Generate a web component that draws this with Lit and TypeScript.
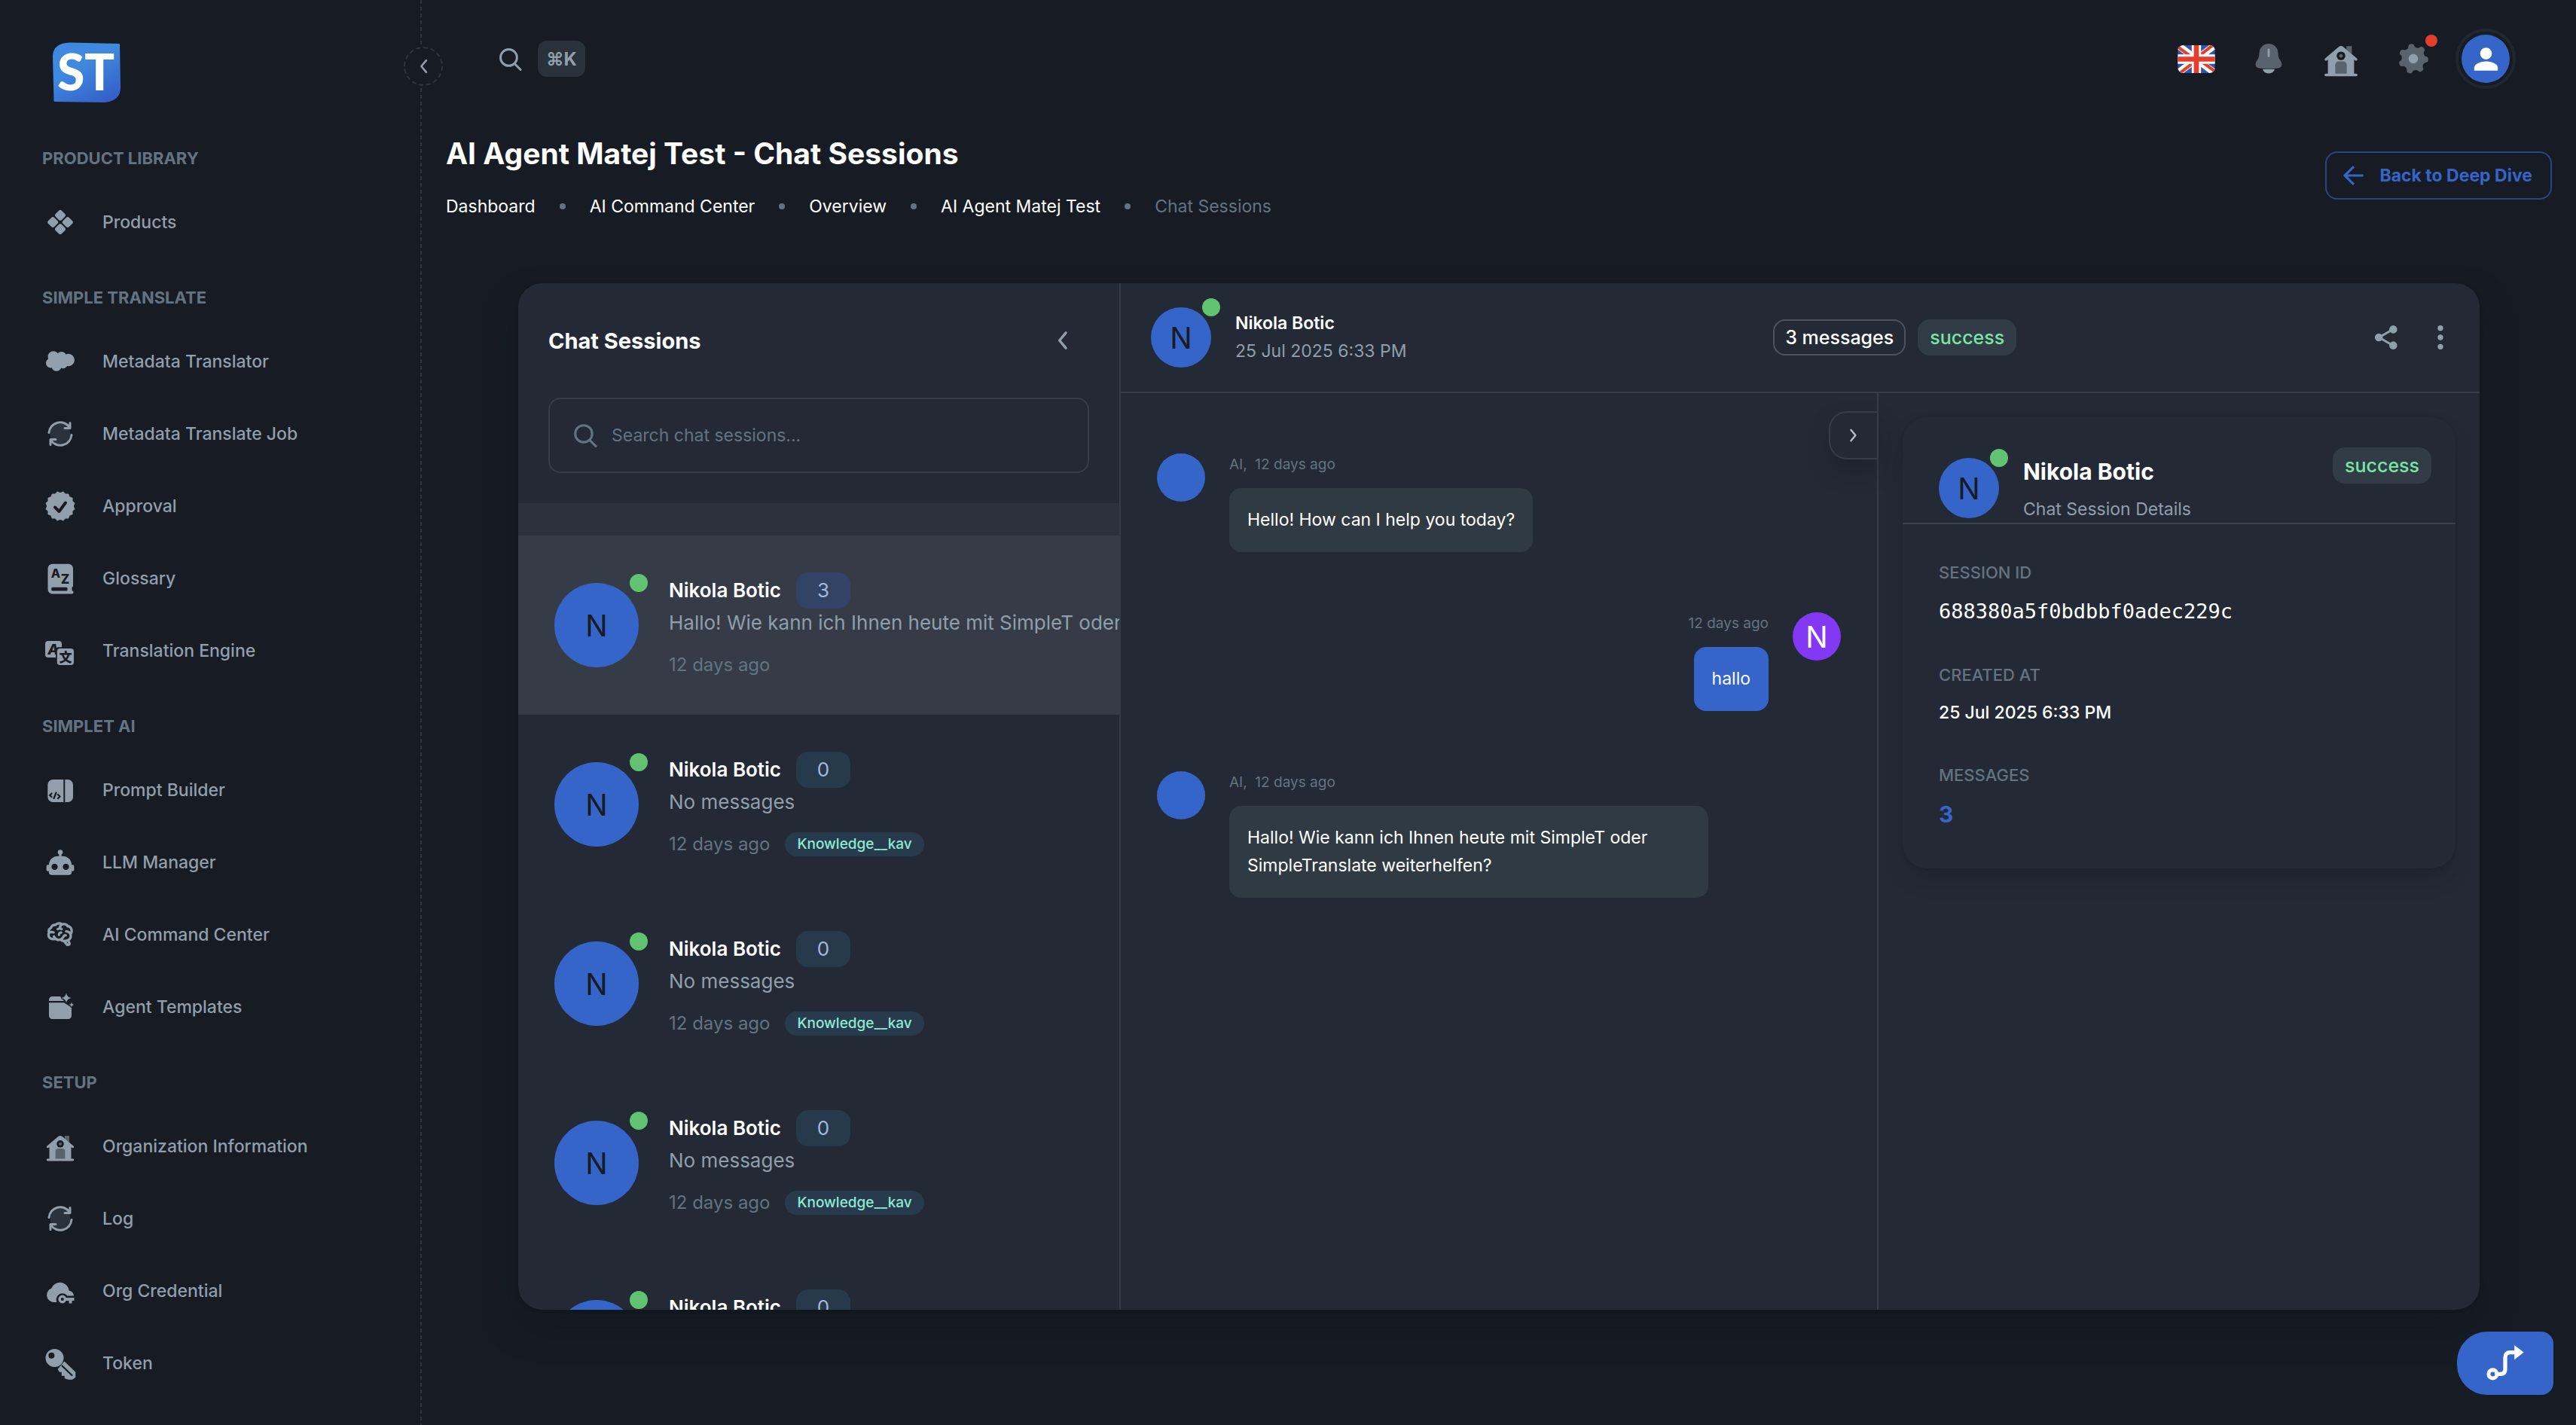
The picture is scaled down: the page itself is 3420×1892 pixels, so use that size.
import { LitElement, html, svg, css, nothing, TemplateResult, SVGTemplateResult } from "lit";
import { customElement, property } from "lit/decorators.js";
import { classMap } from "lit/directives/class-map.js";

/* ---------- icons: every one is drawn on a 40 x 40 grid ---------- */

const scallop = (): string => {
  const pts: string[] = [];
  const lobes = 16;
  for (let i = 0; i < lobes * 2; i++) {
    const r = i % 2 ? 17 : 19;
    const a = (Math.PI * i) / lobes - Math.PI / 2 + Math.PI / lobes;
    pts.push(`${(20 + r * Math.cos(a)).toFixed(2)},${(20 + r * Math.sin(a)).toFixed(2)}`);
  }
  return pts.join(" ");
};

const gear = (): string => {
  let d = "";
  const n = 96;
  for (let i = 0; i <= n; i++) {
    const a = (2 * Math.PI * i) / n;
    const r = 17.6 + 2.3 * Math.tanh(2.2 * Math.sin(7 * a + 1.1));
    d += `${i ? "L" : "M"}${(20 + r * Math.cos(a)).toFixed(2)} ${(20 + r * Math.sin(a)).toFixed(2)}`;
  }
  return d + "Z";
};

const refresh = svg`
  <circle cx="20" cy="20" r="13.5" class="shade"></circle>
  <path class="line" d="M5 18.500A15 15 0 0 1 32.500 11.500M35 21.500A15 15 0 0 1 7.500 28.500"></path>
  <path class="line" d="M33 5.500V12.500H26M7 34.500V27.500H14"></path>`;

const house = svg`
  <path class="dim" d="M26 6h6v9l-6-5z"></path>
  <path d="M17.200 7a4.500 4.500 0 0 1 5.600 0L37.500 19.500a1.500 1.500 0 0 1-1.800 2.400L34.500 21V36.500h2.300a1.400 1.400 0 0 1 0 2.900H3.200a1.400 1.400 0 0 1 0-2.900H5.500V21l-1.200.900a1.500 1.500 0 0 1-1.800-2.400z"></path>
  <circle class="cut" cx="20" cy="16.800" r="4.800"></circle>
  <circle class="dim" cx="20" cy="16.800" r="2"></circle>
  <path class="dim" d="M13.600 27a4 4 0 0 1 4-4h4.800a4 4 0 0 1 4 4v9.500H13.600z"></path>`;

const icons: Record<string, SVGTemplateResult> = {
  products: svg`${[
    [20, 10.8],
    [20, 29.2],
    [10.2, 20],
    [29.8, 20],
  ].map(([x, y]) => svg`<rect x=${x - 5.7} y=${y - 5.7} width="11.400" height="11.400" rx="2.800" transform="rotate(45 ${x} ${y})"></rect>`)}`,
  cloud: svg`<g transform="translate(1 0.500) scale(1.580)"><path d="M10.006 5.415a4.195 4.195 0 013.045-1.306c1.560 0 2.954.900 3.690 2.205.630-.300 1.350-.450 2.100-.450 2.850 0 5.159 2.340 5.159 5.220s-2.310 5.220-5.176 5.220c-.345 0-.690-.044-1.020-.104a3.750 3.750 0 01-3.300 1.950c-.600 0-1.155-.150-1.650-.375A4.314 4.314 0 018.880 20.400a4.302 4.302 0 01-4.050-2.820c-.270.062-.540.076-.825.076-2.204 0-4.005-1.800-4.005-4.050 0-1.500.811-2.805 2.010-3.510-.255-.570-.390-1.200-.390-1.846 0-2.580 2.100-4.650 4.650-4.650 1.530 0 2.850.705 3.720 1.800"></path></g>`,
  refresh,
  approval: svg`
    <polygon points=${scallop()} stroke="currentColor" stroke-width="1.500" stroke-linejoin="round"></polygon>
    <path class="cutline" d="M13 21.500L18.500 27L27 15.500"></path>`,
  glossary: svg`
    <path d="M9.500.700H31a6 6 0 0 1 6 6V29.500a2.500 2.500 0 0 1-1.500 2.300v4.400a2 2 0 0 1-.200 4.300H9.500a6 6 0 0 1-6-6V6.700a6 6 0 0 1 6-6z"></path>
    <rect class="cut" x="8.300" y="31.700" width="21.200" height="4.800" rx="1.500"></rect>
    <text x="14" y="18.500" font-size="16" class="glyph">A</text>
    <text x="26.500" y="26.500" font-size="17" class="glyph">Z</text>`,
  translate: svg`
    <rect x="0" y="7" width="22" height="22" rx="4"></rect>
    <text x="10.500" y="25" font-size="19" font-style="italic" class="glyph">A</text>
    <rect class="cut" x="14" y="15.300" width="26" height="26" rx="4"></rect>
    <rect x="15.800" y="17" width="22.200" height="22" rx="4"></rect>
    <text x="27" y="34.500" font-size="17" class="glyph">文</text>`,
  prompt: svg`
    <path d="M10.300 6H24.300V36H10.300a7 7 0 0 1-7-7V13a7 7 0 0 1 7-7z"></path>
    <path d="M26.300 6H30a7 7 0 0 1 7 7V29a7 7 0 0 1-7 7H26.300z"></path>
    <path class="cutline thin" d="M8.500 24.500L6 27L8.500 29M14.500 23.500L11.500 31M17 26L19.500 28.500L17 31"></path>`,
  robot: svg`<g transform="scale(1.667)"><path d="M12,2A2,2 0 0,1 14,4C14,4.740 13.600,5.390 13,5.730V7H14A7,7 0 0,1 21,14H22A1,1 0 0,1 23,15V18A1,1 0 0,1 22,19H21V20A2,2 0 0,1 19,22H5A2,2 0 0,1 3,20V19H2A1,1 0 0,1 1,18V15A1,1 0 0,1 2,14H3A7,7 0 0,1 10,7H11V5.730C10.400,5.390 10,4.740 10,4A2,2 0 0,1 12,2M7.500,13A2.500,2.500 0 0,0 5,15.500A2.500,2.500 0 0,0 7.500,18A2.500,2.500 0 0,0 10,15.500A2.500,2.500 0 0,0 7.500,13M16.500,13A2.500,2.500 0 0,0 14,15.500A2.500,2.500 0 0,0 16.500,18A2.500,2.500 0 0,0 19,15.500A2.500,2.500 0 0,0 16.500,13Z"></path></g>`,
  brain: svg`<g transform="scale(1.667)"><path d="M21.33,12.91C21.42,14.46 20.71,15.95 19.44,16.86L20.21,18.35C20.44,18.8 20.47,19.33 20.27,19.8C20.08,20.27 19.69,20.64 19.21,20.8L18.42,21.05C18.25,21.11 18.06,21.14 17.88,21.14C17.37,21.14 16.89,20.91 16.56,20.5L14.44,18C13.55,17.85 12.71,17.47 12,16.9C11.5,17.05 11,17.13 10.5,17.13C9.62,17.13 8.74,16.86 8,16.34C7.47,16.5 6.93,16.57 6.38,16.56C5.59,16.57 4.81,16.41 4.08,16.11C2.65,15.47 1.7,14.07 1.65,12.5C1.57,11.78 1.69,11.05 2,10.39C1.71,9.64 1.68,8.82 1.93,8.06C2.3,7.11 3,6.32 3.87,5.82C4.45,4.13 6.08,3 7.87,3.12C9.47,1.62 11.92,1.46 13.7,2.75C14.12,2.64 14.56,2.58 15,2.58C16.36,2.55 17.65,3.15 18.5,4.22C20.54,4.75 22,6.57 22.08,8.69C22.13,9.8 21.83,10.89 21.22,11.82C21.29,12.18 21.33,12.54 21.33,12.91M16.33,11.5C16.9,11.57 17.35,12 17.35,12.57A1,1 0 0,1 16.35,13.57H15.72C15.4,14.47 14.84,15.26 14.1,15.86C14.35,15.95 14.61,16 14.87,16.07C20,16 19.4,12.87 19.4,12.82C19.34,11.39 18.14,10.27 16.71,10.33A1,1 0 0,1 15.71,9.33A1,1 0 0,1 16.71,8.33C17.94,8.36 19.12,8.82 20.04,9.63C20.09,9.34 20.12,9.04 20.12,8.74C20.06,7.5 19.5,6.42 17.25,6.21C16,3.25 12.85,4.89 12.85,5.81V5.81C12.82,6.04 13.06,6.53 13.1,6.56A1,1 0 0,1 14.1,7.56C14.1,8.11 13.65,8.56 13.1,8.56V8.56C12.57,8.54 12.07,8.34 11.67,8C11.19,8.31 10.64,8.5 10.07,8.56V8.56C9.5,8.61 9.03,8.21 9,7.66C8.92,7.1 9.33,6.61 9.88,6.56C10.04,6.54 10.82,6.42 10.82,5.79V5.79C10.82,5.13 11.07,4.5 11.5,4C10.58,3.75 9.59,4.08 8.59,5.29C6.75,5 6,5.25 5.45,7.2C4.5,7.67 4,8 3.78,9C4.86,8.78 5.97,8.87 7,9.25C7.5,9.44 7.78,10 7.59,10.54C7.4,11.06 6.82,11.32 6.3,11.13C5.57,10.81 4.75,10.79 4,11.07C3.68,11.34 3.68,11.9 3.68,12.34C3.68,13.08 4.05,13.77 4.68,14.17C5.21,14.44 5.8,14.58 6.39,14.57C6.24,14.31 6.11,14.04 6,13.76C5.81,13.22 6.1,12.63 6.64,12.44C7.18,12.25 7.77,12.54 7.96,13.08C8.36,14.22 9.38,15 10.58,15.13C11.95,15.06 13.17,14.25 13.77,13C14,11.62 15.11,11.5 16.33,11.5M18.33,18.97L17.71,17.67L17,17.83L18,19.08L18.33,18.97M13.68,10.36C13.7,9.83 13.3,9.38 12.77,9.33C12.06,9.29 11.37,9.53 10.84,10C10.27,10.58 9.97,11.38 10,12.19A1,1 0 0,0 11,13.19C11.57,13.19 12,12.74 12,12.19C12,11.92 12.07,11.65 12.23,11.43C12.35,11.33 12.5,11.28 12.66,11.28C13.21,11.31 13.68,10.9 13.68,10.36Z"></path></g>`,
  templates: svg`
    <path d="M5 12V10.500a4.500 4.500 0 0 1 4.500-4.500H20l5 6z"></path>
    <path d="M5 14.200H25L30 17.500L35 20V31.500a4.500 4.500 0 0 1-4.500 4.500H9.500a4.500 4.500 0 0 1-4.500-4.500z"></path>
    <path class="halo" d="M28 1.500C29 5.500 30.500 7 34.500 8C30.500 9 29 10.500 28 14.500C27 10.500 25.500 9 21.500 8C25.500 7 27 5.500 28 1.500z"></path>
    <path class="halo" d="M35 13.500C35.500 15.800 36.200 16.500 38.500 17C36.200 17.500 35.500 18.200 35 20.500C34.500 18.200 33.800 17.500 31.500 17C33.800 16.500 34.500 15.800 35 13.500z"></path>`,
  house,
  cloudkey: svg`
    <path d="M10.500 35A9.600 9.600 0 0 1 8.300 16.500A12 12 0 0 1 31.500 19.500A8 8 0 0 1 38.200 27H20V35z"></path>
    <circle class="cut" cx="22.800" cy="31.500" r="8.200"></circle>
    <rect class="cut" x="22" y="26.500" width="18" height="12"></rect>
    <circle class="ring" cx="22.800" cy="31" r="3.700"></circle>
    <path d="M27 29H38.500V33H35.500V36.500H31.500V33H27z"></path>`,
  key: svg`
    <path fill-rule="evenodd" d="M12.500 1A12 12 0 1 0 12.500 25A12 12 0 1 0 12.500 1M8.300 5.800a4 4 0 1 1 0 8a4 4 0 1 1 0-8"></path>
    <path d="M25.500 18.500L39.500 32V38.500L36 41H31L26.500 39.500V36H22.500V31H19.500L17.500 28z" stroke="currentColor" stroke-width="1.500" stroke-linejoin="round"></path>
    <path class="cutline thin" d="M22.500 23.500L35.500 36"></path>`,
  search: svg`
    <circle cx="17.500" cy="17.500" r="13.200" fill="none" stroke="currentColor" stroke-width="3.600"></circle>
    <path d="M27 27.500L36.500 37" fill="none" stroke="currentColor" stroke-width="3.600" stroke-linecap="round"></path>`,
  bell: svg`
    <path class="light" d="M12 34H28A8.200 7 0 0 1 12 34z"></path>
    <path class="dim" d="M20 0A12.500 12.500 0 0 1 32.500 12.500C32.500 17 33.500 19.500 35.600 22.500C38.500 26.500 38 31 33.500 32.300C25 34 15 34 6.500 32.300C2 31 1.500 26.500 4.400 22.500C6.500 19.500 7.500 17 7.500 12.500A12.500 12.500 0 0 1 20 0z"></path>
    <rect class="light" x="18.600" y="6.500" width="2.800" height="11.500" rx="1.400"></rect>`,
  gear: svg`<path class="dim" d=${gear()}></path><circle class="light" cx="20" cy="20" r="6.200"></circle>`,
  person: svg`<circle cx="20" cy="11" r="9.500"></circle><path d="M1 38.500V34C1 27 12 23.500 20 23.500S39 27 39 34V38.500z"></path>`,
  left: svg`<path class="chev" d="M26 8L16 20L26 32"></path>`,
  right: svg`<path class="chev" d="M14 8L24 20L14 32"></path>`,
  arrow: svg`<path class="bar" d="M38 20H4M20 3L3 20L20 37"></path>`,
  share: svg`
    <path class="bar slim" d="M31 7L9 20L31 33"></path>
    <circle cx="31" cy="7.500" r="6.200"></circle><circle cx="8.500" cy="20" r="6.200"></circle><circle cx="31" cy="32.500" r="6.200"></circle>`,
  dots: svg`<circle cx="20" cy="5.500" r="4.300"></circle><circle cx="20" cy="20" r="4.300"></circle><circle cx="20" cy="34.500" r="4.300"></circle>`,
  route: svg`
    <circle cx="6.200" cy="32" r="4.600" fill="none" stroke="currentColor" stroke-width="4.200"></circle>
    <path d="M11 32H14.500Q20 32 20 26.500V13.500Q20 8 25.500 8H32" fill="none" stroke="currentColor" stroke-width="4.400"></path>
    <path d="M30.200 0L40.500 8L30.200 16z"></path>`,
};

@customElement("st-icon")
export class StIcon extends LitElement {
  @property() name = "";
  static styles = css`
    :host {
      display: inline-flex;
      width: 40px;
      height: 40px;
      flex: none;
    }
    svg {
      width: 100%;
      height: 100%;
      overflow: visible;
      fill: currentColor;
    }
    .dim {
      fill: #59636d;
    }
    .light {
      fill: #919eab;
    }
    .shade {
      fill: #2a323d;
    }
    .cut {
      fill: #171c24;
    }
    .line,
    .chev,
    .bar {
      fill: none;
      stroke: currentColor;
      stroke-width: 3;
      stroke-linecap: round;
      stroke-linejoin: round;
    }
    .chev {
      stroke-width: 4;
    }
    .bar {
      stroke-width: 4.5;
      stroke-linecap: butt;
      stroke-linejoin: miter;
    }
    .slim {
      stroke-width: 3.5;
    }
    .ring {
      fill: #171c24;
      stroke: currentColor;
      stroke-width: 3.5;
    }
    .halo {
      stroke: #171c24;
      stroke-width: 2.5;
      paint-order: stroke;
    }
    .cutline {
      fill: none;
      stroke: #171c24;
      stroke-width: 4;
      stroke-linecap: round;
      stroke-linejoin: round;
    }
    .thin {
      stroke-width: 2.2;
    }
    .glyph {
      font-family: Inter, "Noto Sans CJK SC", sans-serif;
      font-weight: 800;
      text-anchor: middle;
      fill: #171c24;
    }
  `;
  render() {
    return html`<svg viewBox="0 0 40 40" aria-hidden="true">${icons[this.name] ?? nothing}</svg>`;
  }
}

/* ---------- avatar with an optional presence dot ---------- */

@customElement("st-avatar")
export class StAvatar extends LitElement {
  @property() letter = "";
  @property() size = "m";
  @property({ type: Boolean }) online = false;
  @property({ type: Boolean }) violet = false;
  static styles = css`
    :host {
      display: block;
      flex: none;
    }
    .disc {
      position: relative;
      display: flex;
      align-items: center;
      justify-content: center;
      width: 80px;
      height: 80px;
      border-radius: 50%;
      background: #3565c9;
      color: #171c24;
      font-size: 39px;
    }
    .l {
      width: 112px;
      height: 112px;
    }
    .s {
      width: 64px;
      height: 64px;
    }
    .violet {
      background: #8338f4;
      color: #fff;
    }
    .dot {
      position: absolute;
      top: -12px;
      right: -12px;
      width: 24px;
      height: 24px;
      border-radius: 50%;
      background: #61c26f;
    }
  `;
  render() {
    const c = { disc: true, l: this.size === "l", s: this.size === "s", violet: this.violet };
    return html`<div class=${classMap(c)}>${this.letter}${this.online ? html`<span class="dot"></span>` : nothing}</div>`;
  }
}

/* ---------- data ---------- */

interface NavGroup {
  title: string;
  items: [string, string][];
}

const nav: NavGroup[] = [
  { title: "PRODUCT LIBRARY", items: [["products", "Products"]] },
  {
    title: "SIMPLE TRANSLATE",
    items: [
      ["cloud", "Metadata Translator"],
      ["refresh", "Metadata Translate Job"],
      ["approval", "Approval"],
      ["glossary", "Glossary"],
      ["translate", "Translation Engine"],
    ],
  },
  {
    title: "SIMPLET AI",
    items: [
      ["prompt", "Prompt Builder"],
      ["robot", "LLM Manager"],
      ["brain", "AI Command Center"],
      ["templates", "Agent Templates"],
    ],
  },
  {
    title: "SETUP",
    items: [
      ["house", "Organization Information"],
      ["refresh", "Log"],
      ["cloudkey", "Org Credential"],
      ["key", "Token"],
    ],
  },
];

interface Session {
  name: string;
  count: number;
  preview: string;
  tag?: string;
  active?: boolean;
}

const idle: Session = { name: "Nikola Botic", count: 0, preview: "No messages", tag: "Knowledge__kav" };
const sessions: Session[] = [
  {
    name: "Nikola Botic",
    count: 3,
    preview: "Hallo! Wie kann ich Ihnen heute mit SimpleT oder SimpleTranslate weiterhelfen?",
    active: true,
  },
  idle,
  idle,
  idle,
  idle,
];

const crumbs = ["Dashboard", "AI Command Center", "Overview", "AI Agent Matej Test"];

/* ---------- page ---------- */

@customElement("app-root")
export class AppRoot extends LitElement {
  static styles = css`
    :host {
      display: block;
      font-family: Inter, "Liberation Sans", sans-serif;
      font-size: 23px;
      line-height: 37px;
      color: #fff;
      background: #171c24;
    }
    * {
      box-sizing: border-box;
    }
    button,
    input {
      font: inherit;
      color: inherit;
      background: none;
      border: 0;
      padding: 0;
      margin: 0;
    }
    button {
      cursor: pointer;
    }
    a {
      color: inherit;
      text-decoration: none;
    }
    ul,
    ol,
    dl,
    dd,
    h1,
    h2,
    h3,
    p {
      margin: 0;
      padding: 0;
      list-style: none;
    }
    .app {
      display: grid;
      grid-template-columns: 560px minmax(0, 1fr);
      height: 100vh;
      overflow: hidden;
    }

    .sidebar {
      position: relative;
      background: repeating-linear-gradient(#2d3540 0 5px, transparent 5px 9px) right / 2px 100% no-repeat;
    }
    .brand {
      display: block;
      height: 158px;
      padding: 56px 69px 0;
    }
    .logo {
      width: 92px;
      height: 81px;
      display: block;
    }
    .logo text {
      font: 900 66px Lato, sans-serif;
      fill: #fff;
    }
    .toggle {
      position: absolute;
      top: 62px;
      right: -28px;
      width: 52px;
      height: 52px;
      border: 2px dashed #2d3540;
      border-radius: 50%;
      background: #171c24;
      color: #919eab;
      display: flex;
      align-items: center;
      justify-content: center;
    }
    .toggle st-icon {
      width: 26px;
      height: 26px;
    }
    .group-title {
      padding: 40px 56px 25px;
      font-size: 22px;
      line-height: 24px;
      font-weight: 700;
      color: #637381;
    }
    .nav-link {
      display: flex;
      align-items: center;
      gap: 36px;
      height: 96px;
      padding: 0 60px;
      font-weight: 500;
      color: #919eab;
    }

    .main {
      display: flex;
      flex-direction: column;
      min-width: 0;
      min-height: 0;
    }
    .topbar {
      display: flex;
      align-items: center;
      justify-content: space-between;
      flex: none;
      height: 156px;
      padding: 0 80px 0 101px;
    }
    .finder {
      display: flex;
      align-items: center;
      gap: 20px;
      color: #919eab;
    }
    .finder st-icon {
      width: 33px;
      height: 33px;
    }
    .keys {
      display: flex;
      align-items: center;
      justify-content: center;
      width: 63px;
      height: 48px;
      border-radius: 12px;
      background: #29313b;
      font-size: 24px;
      font-weight: 700;
    }
    .tools {
      display: flex;
      gap: 16px;
      color: #919eab;
    }
    .tool {
      position: relative;
      display: flex;
      align-items: center;
      justify-content: center;
      width: 80px;
      height: 80px;
      border-radius: 50%;
    }
    .tool .wide {
      width: 48px;
      height: 48px;
    }
    .flag {
      width: 50px;
      height: 37px;
      border-radius: 8px;
    }
    .alert {
      position: absolute;
      top: 8px;
      right: 8px;
      width: 16px;
      height: 16px;
      border-radius: 50%;
      background: #e53e2d;
    }
    .me {
      border: 4px solid #212730;
    }
    .me span {
      display: flex;
      align-items: center;
      justify-content: center;
      width: 64px;
      height: 64px;
      flex: none;
      border-radius: 50%;
      background: #3565c9;
      color: #fff;
    }
    .me st-icon {
      width: 33px;
      height: 33px;
    }

    .heading {
      display: flex;
      align-items: center;
      justify-content: space-between;
      flex: none;
      padding: 16px 32px 0;
    }
    h1 {
      font-size: 39px;
      line-height: 64px;
      font-weight: 700;
    }
    .crumbs {
      display: flex;
      align-items: center;
      gap: 32px;
      margin-top: 18px;
      line-height: 40px;
    }
    .crumbs li {
      display: flex;
      align-items: center;
      gap: 32px;
    }
    .crumbs li + li::before {
      content: "";
      width: 8px;
      height: 8px;
      border-radius: 50%;
      background: #637381;
    }
    .crumbs .here {
      color: #637381;
    }
    .back {
      display: flex;
      align-items: center;
      gap: 20px;
      height: 64px;
      padding: 0 24px 0 22px;
      border: 2px solid #2b4580;
      border-radius: 16px;
      color: #3565c9;
      font-weight: 700;
    }
    .back st-icon {
      width: 28px;
      height: 28px;
    }

    .board {
      display: grid;
      grid-template-columns: 800px minmax(0, 1fr);
      flex: 1;
      min-height: 0;
      margin: 82px 128px 153px;
      border-radius: 32px;
      overflow: hidden;
      background: #232a35;
      box-shadow: 0 0 4px rgba(10, 20, 24, 0.4), 0 24px 48px -8px rgba(10, 20, 24, 0.5);
    }

    .list {
      display: flex;
      flex-direction: column;
      min-height: 0;
      border-right: 2px solid #343c48;
      overflow: hidden;
    }
    .list-head {
      flex: none;
      padding: 40px;
    }
    .list-title {
      display: flex;
      align-items: center;
      justify-content: space-between;
      height: 72px;
      margin-bottom: 40px;
    }
    h2 {
      font-size: 29px;
      font-weight: 700;
    }
    .fold {
      display: flex;
      align-items: center;
      justify-content: center;
      width: 72px;
      height: 72px;
      color: #919eab;
    }
    .fold st-icon {
      width: 34px;
      height: 34px;
    }
    .search {
      display: flex;
      align-items: center;
      gap: 18px;
      height: 100px;
      padding: 0 30px;
      border: 2px solid #353d48;
      border-radius: 16px;
      color: #637381;
    }
    .search st-icon {
      width: 34px;
      height: 34px;
    }
    .search input {
      flex: 1;
      min-width: 0;
      outline: none;
    }
    .search input::placeholder {
      color: #637381;
      opacity: 1;
    }
    .band {
      flex: none;
      height: 43px;
      background: #2b323e;
    }
    .session {
      display: flex;
      align-items: center;
      gap: 40px;
      width: 100%;
      height: 238px;
      padding: 0 0 0 48px;
      text-align: left;
      white-space: nowrap;
    }
    .session.active {
      background: #353c48;
    }
    .row {
      display: flex;
      align-items: center;
      gap: 16px;
    }
    .session .row {
      gap: 20px;
    }
    .name {
      font-size: 26px;
      font-weight: 600;
      line-height: 48px;
    }
    .count {
      width: 72px;
      height: 48px;
      border-radius: 16px;
      background: #263a4c;
      color: #a4b8dd;
      font-size: 26px;
      line-height: 48px;
      text-align: center;
    }
    .active .count {
      background: #334365;
    }
    .preview {
      display: block;
      color: #919eab;
      font-size: 26px;
      line-height: 38px;
      margin-bottom: 20px;
    }
    .when {
      color: #637381;
      font-size: 24px;
      line-height: 34px;
    }
    .tag {
      height: 32px;
      padding: 0 16px;
      border-radius: 16px;
      background: #273b4d;
      color: #8fe9d4;
      font-size: 19px;
      font-weight: 500;
      line-height: 32px;
    }

    .detail {
      display: flex;
      flex-direction: column;
      min-width: 0;
      min-height: 0;
    }
    .detail-head {
      display: flex;
      align-items: center;
      justify-content: space-between;
      flex: none;
      height: 146px;
      padding: 0 16px 0 40px;
      border-bottom: 2px solid #353d48;
    }
    .who {
      display: flex;
      align-items: center;
      gap: 32px;
      padding-right: 32px;
    }
    .who strong {
      display: block;
      font-weight: 600;
    }
    .muted {
      color: #919eab;
    }
    .pill {
      display: inline-flex;
      align-items: center;
      height: 48px;
      padding: 0 14px;
      border: 2px solid transparent;
      border-radius: 16px;
      font-size: 25px;
      font-weight: 500;
    }
    .outline {
      border-color: #4a545e;
    }
    .ok {
      background: #323c46;
      color: #79e6a4;
    }
    .actions {
      display: flex;
      color: #919eab;
    }
    .actions button {
      display: flex;
      align-items: center;
      justify-content: center;
      width: 72px;
      height: 72px;
    }
    .actions st-icon {
      width: 34px;
      height: 34px;
    }

    .panes {
      display: grid;
      grid-template-columns: minmax(0, 1fr) 800px;
      flex: 1;
      min-height: 0;
    }
    .chat {
      position: relative;
      padding: 80px 48px;
    }
    .chat-fold {
      position: absolute;
      top: 24px;
      right: -2px;
      width: 66px;
      height: 64px;
      display: flex;
      align-items: center;
      justify-content: center;
      border: 2px solid #353d48;
      border-radius: 24px 0 0 24px;
      background: #232a35;
      color: #b4bec8;
      box-shadow: 0 16px 32px -4px rgba(16, 20, 28, 0.35);
    }
    .chat-fold st-icon {
      width: 24px;
      height: 24px;
    }
    .thread {
      display: flex;
      flex-direction: column;
      gap: 80px;
    }
    .msg {
      display: flex;
      gap: 32px;
      align-items: flex-start;
    }
    .mine {
      flex-direction: row-reverse;
      text-align: right;
    }
    .stamp {
      color: #637381;
      font-size: 19px;
      line-height: 30px;
      margin-bottom: 16px;
      white-space: pre;
    }
    .bubble {
      width: fit-content;
      max-width: 636px;
      margin-left: 0;
      padding: 24px;
      border-radius: 16px;
      background: #303a42;
      text-align: left;
    }
    .mine .bubble {
      margin-left: auto;
      background: #3565c9;
    }

    .info {
      padding: 32px;
      border-left: 2px solid #353d48;
    }
    .card {
      border-radius: 32px;
      background: #232a35;
      box-shadow: 0 0 4px rgba(16, 20, 28, 0.12), 0 16px 32px -8px rgba(16, 20, 28, 0.3);
    }
    .card-head {
      display: flex;
      align-items: flex-start;
      gap: 32px;
      height: 142px;
      padding: 40px 32px 0 48px;
      border-bottom: 2px solid #3a434d;
    }
    .card-head st-avatar {
      padding-top: 14px;
    }
    .card-name {
      flex: 1;
      padding-top: 8px;
    }
    h3 {
      font-size: 30px;
      line-height: 48px;
      font-weight: 700;
    }
    .card-name p {
      margin-top: 8px;
      line-height: 37px;
    }
    .facts {
      padding: 48px 48px 52px;
    }
    dt {
      font-size: 22px;
      font-weight: 500;
      line-height: 32px;
      color: #637381;
    }
    dd {
      padding: 16px 0 48px;
      font-weight: 500;
    }
    .mono {
      font-family: "DejaVu Sans Mono", monospace;
      font-size: 27px;
      line-height: 40px;
      font-weight: 400;
    }
    .total {
      padding-bottom: 0;
      font-size: 30px;
      line-height: 40px;
      font-weight: 700;
      color: #3565c9;
    }

    .flow {
      position: fixed;
      right: 30px;
      bottom: 40px;
      display: flex;
      align-items: center;
      justify-content: center;
      width: 128px;
      height: 84px;
      border-radius: 40px 16px 16px 40px;
      background: #3565c9;
      color: #fff;
    }
    .flow st-icon {
      width: 48px;
      height: 48px;
    }
  `;

  private sidebar(): TemplateResult {
    return html`<nav class="sidebar" aria-label="Main">
      <a class="brand" href="#" aria-label="Home">
        <svg class="logo" viewBox="0 0 92 81">
          <defs>
            <linearGradient id="lg" x1="0.2" y1="0" x2="0.8" y2="1">
              <stop offset="0.35" stop-color="#3f8ae0"></stop>
              <stop offset="1" stop-color="#345fc9"></stop>
            </linearGradient>
          </defs>
          <path d="M24 0.500L89 2Q90 2 90 3L91 60Q91 78 70 80L4 79Q2.500 79 2.500 77.500L1 18Q2 1 24 0.500z" fill="url(#lg)"></path>
          <text x="45" y="64" text-anchor="middle">ST</text>
        </svg>
      </a>
      <button class="toggle" aria-label="Collapse menu"><st-icon name="left"></st-icon></button>
      ${nav.map(
        (g) => html`<div class="group-title">${g.title}</div>
          <ul>
            ${g.items.map(
              ([icon, label]) =>
                html`<li><a class="nav-link" href="#"><st-icon name=${icon}></st-icon>${label}</a></li>`
            )}
          </ul>`
      )}
    </nav>`;
  }

  private topbar(): TemplateResult {
    return html`<header class="topbar">
      <button class="finder" aria-label="Search">
        <st-icon name="search"></st-icon><span class="keys">⌘K</span>
      </button>
      <div class="tools">
        <button class="tool" aria-label="Language">
          <svg class="flag" viewBox="0 0 48 36">
            <rect width="48" height="36" fill="#2f55a4"></rect>
            <path d="M0 0L48 36M48 0L0 36" stroke="#fff" stroke-width="9"></path>
            <path d="M-1.500 1L22 18.500M49.500 35L26 17.500M46.500-1L26 15M1.500 37L22 21" stroke="#e53e2d" stroke-width="4"></path>
            <path d="M24 0V36M0 18H48" stroke="#fff" stroke-width="12"></path>
            <path d="M24 0V36M0 18H48" stroke="#e53e2d" stroke-width="6.500"></path>
          </svg>
        </button>
        <button class="tool" aria-label="Notifications"><st-icon name="bell"></st-icon></button>
        <button class="tool" aria-label="Organization"><st-icon class="wide" name="house"></st-icon></button>
        <button class="tool" aria-label="Settings"><st-icon name="gear"></st-icon><span class="alert"></span></button>
        <button class="tool me" aria-label="Account"><span><st-icon name="person"></st-icon></span></button>
      </div>
    </header>`;
  }

  private list(): TemplateResult {
    return html`<section class="list">
      <div class="list-head">
        <div class="list-title">
          <h2>Chat Sessions</h2>
          <button class="fold" aria-label="Hide sessions"><st-icon name="left"></st-icon></button>
        </div>
        <label class="search">
          <st-icon name="search"></st-icon>
          <input type="text" aria-label="Search chat sessions" placeholder="Search chat sessions..." />
        </label>
      </div>
      <div class="band"></div>
      <ul>
        ${sessions.map(
          (s) => html`<li>
            <button class=${classMap({ session: true, active: !!s.active })}>
              <st-avatar letter="N" size="l" online></st-avatar>
              <span>
                <span class="row"><span class="name">${s.name}</span><span class="count">${s.count}</span></span>
                <span class="preview">${s.preview}</span>
                <span class="row">
                  <span class="when">12 days ago</span>${s.tag ? html`<span class="tag">${s.tag}</span>` : nothing}
                </span>
              </span>
            </button>
          </li>`
        )}
      </ul>
    </section>`;
  }

  private detail(): TemplateResult {
    return html`<section class="detail">
      <header class="detail-head">
        <div class="who">
          <st-avatar letter="N" online></st-avatar>
          <div><strong>Nikola Botic</strong><span class="muted">25 Jul 2025 6:33 PM</span></div>
        </div>
        <div class="row"><span class="pill outline">3 messages</span><span class="pill ok">success</span></div>
        <div class="actions">
          <button aria-label="Share"><st-icon name="share"></st-icon></button>
          <button aria-label="More"><st-icon name="dots"></st-icon></button>
        </div>
      </header>
      <div class="panes">
        <div class="chat">
          <div class="thread">
            <div class="msg">
              <st-avatar size="s"></st-avatar>
              <div>
                <div class="stamp">AI,  12 days ago</div>
                <p class="bubble">Hello! How can I help you today?</p>
              </div>
            </div>
            <div class="msg mine">
              <st-avatar size="s" letter="N" violet></st-avatar>
              <div>
                <div class="stamp">12 days ago</div>
                <p class="bubble">hallo</p>
              </div>
            </div>
            <div class="msg">
              <st-avatar size="s"></st-avatar>
              <div>
                <div class="stamp">AI,  12 days ago</div>
                <p class="bubble">Hallo! Wie kann ich Ihnen heute mit SimpleT oder SimpleTranslate weiterhelfen?</p>
              </div>
            </div>
          </div>
          <button class="chat-fold" aria-label="Hide details"><st-icon name="right"></st-icon></button>
        </div>
        <aside class="info">
          <div class="card">
            <div class="card-head">
              <st-avatar letter="N" online></st-avatar>
              <div class="card-name">
                <h3>Nikola Botic</h3>
                <p class="muted">Chat Session Details</p>
              </div>
              <span class="pill ok">success</span>
            </div>
            <dl class="facts">
              <dt>SESSION ID</dt>
              <dd class="mono">688380a5f0bdbbf0adec229c</dd>
              <dt>CREATED AT</dt>
              <dd>25 Jul 2025 6:33 PM</dd>
              <dt>MESSAGES</dt>
              <dd class="total">3</dd>
            </dl>
          </div>
        </aside>
      </div>
    </section>`;
  }

  render() {
    return html`<div class="app">
      ${this.sidebar()}
      <main class="main">
        ${this.topbar()}
        <div class="heading">
          <div>
            <h1>AI Agent Matej Test - Chat Sessions</h1>
            <ol class="crumbs">
              ${crumbs.map((c) => html`<li><a href="#">${c}</a></li>`)}
              <li class="here">Chat Sessions</li>
            </ol>
          </div>
          <button class="back"><st-icon name="arrow"></st-icon>Back to Deep Dive</button>
        </div>
        <div class="board">${this.list()}${this.detail()}</div>
      </main>
      <button class="flow" aria-label="Open flow"><st-icon name="route"></st-icon></button>
    </div>`;
  }
}
